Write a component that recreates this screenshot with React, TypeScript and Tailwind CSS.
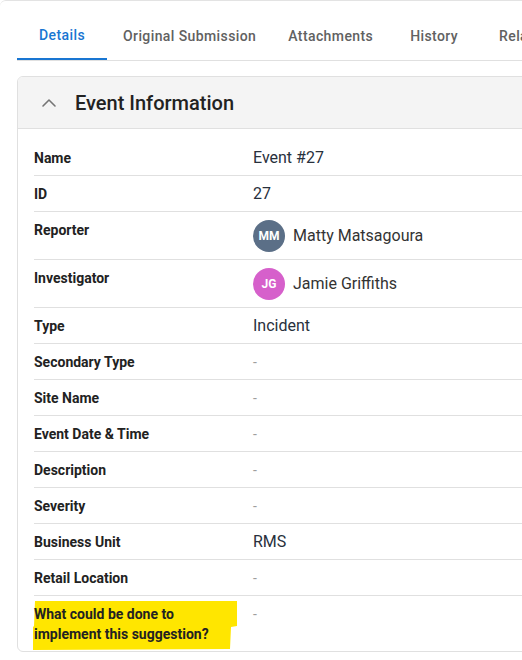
import { ChevronUp } from 'lucide-react';

const tabs = ['Details', 'Original Submission', 'Attachments', 'History', 'Related'];

type Row = {
  label: string;
  value?: string;
  avatar?: { initials: string; bg: string };
  highlight?: boolean;
};

const rows: Row[] = [
  { label: 'Name', value: 'Event #27' },
  { label: 'ID', value: '27' },
  { label: 'Reporter', value: 'Matty Matsagoura', avatar: { initials: 'MM', bg: 'bg-[#5b6f87]' } },
  { label: 'Investigator', value: 'Jamie Griffiths', avatar: { initials: 'JG', bg: 'bg-[#d660cb]' } },
  { label: 'Type', value: 'Incident' },
  { label: 'Secondary Type' },
  { label: 'Site Name' },
  { label: 'Event Date & Time' },
  { label: 'Description' },
  { label: 'Severity' },
  { label: 'Business Unit', value: 'RMS' },
  { label: 'Retail Location' },
  { label: 'What could be done to implement this suggestion?', highlight: true },
];

function Value({ row }: { row: Row }) {
  if (row.avatar) {
    return (
      <div className="flex items-center gap-2">
        <div className={`w-8 h-8 rounded-full flex items-center justify-center text-white text-[12px] leading-none font-bold ${row.avatar.bg}`}>
          {row.avatar.initials}
        </div>
        <div className="text-[16px] leading-5 text-[#333]">{row.value}</div>
      </div>
    );
  }
  if (!row.value) return <div className="text-[14px] leading-5 text-[#9e9e9e]">-</div>;
  return <div className="text-[16px] leading-5 text-[#28303c]">{row.value}</div>;
}

export default function App() {
  return (
    <div className="w-[522px] h-[660px] overflow-hidden bg-white font-['Roboto',sans-serif]">
      <div className="border-t border-[#e3e3e3] rounded-tl-md pl-[17px] pt-[11px]">
        {/* Tabs */}
        <div className="flex border-b border-[#e0e0e0] w-[700px]">
          {tabs.map((t, i) => (
            <div
              key={t}
              className={`min-w-[90px] h-12 px-4 flex items-center justify-center text-[14px] tracking-[0.4px] font-medium shrink-0 ${
                i === 0 ? 'text-[#1976d2] border-b-2 border-[#1976d2]' : 'text-[#616161]'
              }`}
            >
              {t}
            </div>
          ))}
        </div>

        {/* Card */}
        <div className="mt-[15px] w-[700px] border border-[#e0e0e0] rounded-md overflow-hidden">
          <div className="h-[52px] bg-[#f4f4f4] border-b border-[#e0e0e0] flex items-center pl-[19px] gap-[14px]">
            <ChevronUp className="w-6 h-6 text-[#757575]" strokeWidth={1.6} />
            <span className="text-[20px] font-medium text-[#222]">Event Information</span>
          </div>
          <div className="px-4 pt-[11px]">
            {rows.map((row, i) => (
              <div
                key={row.label}
                className={`flex items-start pt-2 pb-[7px] leading-5 ${i < rows.length - 1 ? 'border-b border-[#e0e0e0]' : ''}`}
              >
                <div className="w-[219px] shrink-0 pr-4 relative">
                  {row.highlight && (
                    <svg className="absolute left-[-2px] top-[-3px]" width="210" height="52" viewBox="0 0 210 52">
                      <polygon
                        points="3,0 205,0 205,25 199,26 198,48 1,49 1,26 2,25"
                        fill="#ffe600"
                      />
                    </svg>
                  )}
                  <div className="relative text-[14px] leading-5 font-bold text-[#222]">{row.label}</div>
                </div>
                <Value row={row} />
              </div>
            ))}
          </div>
        </div>
      </div>
    </div>
  );
}
